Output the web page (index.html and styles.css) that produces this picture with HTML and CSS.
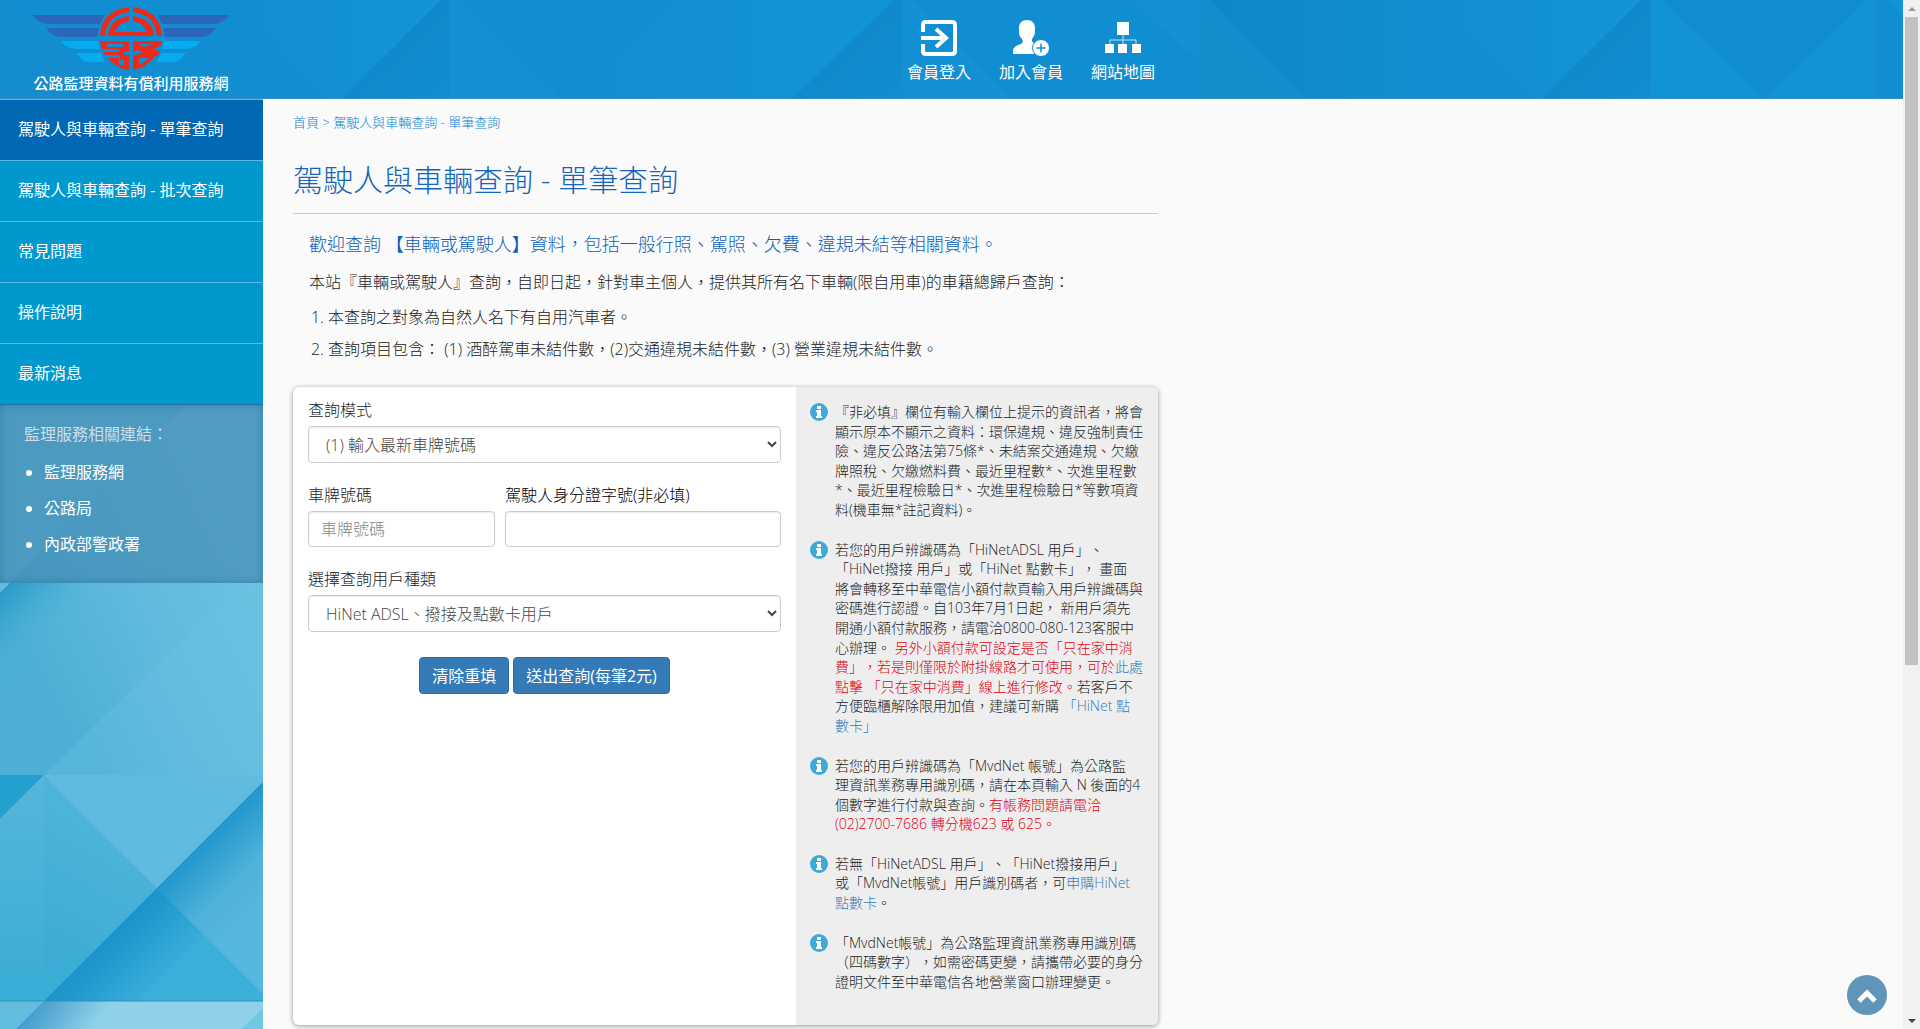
FILE: index.html
```html
<!DOCTYPE html>
<html lang="zh-Hant">
<head>
<meta charset="utf-8">
<title>公路監理資料有償利用服務網</title>
<link rel="stylesheet" href="styles.css">
</head>
<body>
<div class="page">
  <header class="header">
    <svg class="header-art" viewBox="0 0 1903 99" preserveAspectRatio="none" aria-hidden="true">
      <defs>
        <linearGradient id="shadeRight" x1="0" y1="0" x2="1" y2="0">
          <stop offset="0" stop-color="#0f84c6" stop-opacity=".8"/>
          <stop offset="1" stop-color="#118ed1" stop-opacity="0"/>
        </linearGradient>
        <linearGradient id="light" x1="0" y1="0" x2="1" y2="0">
          <stop offset="0" stop-color="#118ed1"/>
          <stop offset="1" stop-color="#1195d7"/>
        </linearGradient>
        <linearGradient id="dark" x1="0" y1="0" x2="1" y2="1">
          <stop offset="0" stop-color="#1084c8"/>
          <stop offset="1" stop-color="#118dd1"/>
        </linearGradient>
      </defs>
      <path fill="#148ccd" d="M0 0H10L110 99H0Z"/>
      <path fill="url(#light)" d="M230 0H441L343 99H330Z"/>
      <path fill="url(#dark)" d="M441 0H450V99H343Z"/>
      <path fill="#1292d5" d="M450 0H460L560 99H450Z"/>
      <path fill="url(#light)" d="M673 0H894L793 99H569Z"/>
      <path fill="url(#dark)" d="M894 0H903V99H793Z"/>
      <path fill="#1391d4" d="M903 0H912L1012 99H903Z"/>
      <path fill="#1292d5" d="M1130 0H1200V62Z"/>
      <path fill="#148dcd" d="M1200 0H1210L1305 99H1200Z"/>
      <path fill="url(#shadeRight)" d="M1210 0H1440L1535 99H1305Z"/>
      <path fill="url(#light)" d="M1435 0H1641L1543 99H1535Z"/>
      <path fill="url(#dark)" d="M1641 0H1651V99H1543Z"/>
      <path fill="#1194d6" d="M1651 0H1661L1761 99H1651Z"/>
      <path fill="#1194d6" d="M1867 0H1876V99H1768Z"/>
      <path fill="#1195d7" d="M1887 0H1903V16Z"/>
    </svg>
    <div class="header-inner">
      <a class="brand" href="#">
        <svg class="brand-mark" viewBox="0 0 198 66" aria-hidden="true">
          <g fill="#2b66ba">
            <path d="M0 9H73L68 18H16Q8 18 0 9Z"/>
            <path d="M198 9H125L130 18H182Q190 18 198 9Z"/>
            <path d="M14 22H67L65 31H29Q20 31 14 22Z"/>
            <path d="M184 22H131L133 31H169Q178 31 184 22Z"/>
          </g>
          <g fill="#05acf0">
            <path d="M29 35H66L68 43H45Q35 43 29 35Z"/>
            <path d="M169 35H132L130 43H153Q163 43 169 35Z"/>
            <path d="M45 47H69L73 56H58Q49 56 45 47Z"/>
            <path d="M153 47H129L125 56H140Q149 56 153 47Z"/>
          </g>
          <g fill="#e92a1d">
            <path d="M97 1V6Q75 9 73 30H68Q69 5 97 1Z"/>
            <path d="M101 1V6Q123 9 125 30H130Q129 5 101 1Z"/>
            <path fill-rule="evenodd" d="M97 10V15Q86 17 83 26H115Q112 17 101 15V10Q121 13 122 30H76Q77 13 97 10Z"/>
            <path fill-rule="evenodd" d="M68 35H97V46H92V49H97V64Q84 62 76 52H87V59H92V54H88V49H73L71 46H87V43H70ZM75 38V41H91V38Z"/>
            <path fill-rule="evenodd" d="M101 35H130L129 39L121 44L128 45L126 50H123Q114 62 101 64V50L111 46L105 44L101 47ZM107 38L112 41L121 38ZM107 52V59Q113 56 117 52Z"/>
          </g>
        </svg>
        <span class="brand-name">公路監理資料有償利用服務網</span>
      </a>
      <nav class="top-nav">
        <a href="#">
          <svg viewBox="0 0 36 36" aria-hidden="true"><path d="M2 12V5Q2 2 5 2H31Q34 2 34 5V31Q34 34 31 34H5Q2 34 2 31V24" fill="none" stroke="#fff" stroke-width="4"/><path d="M0 18H25M15 9L25 18L15 27" fill="none" stroke="#fff" stroke-width="4"/></svg>
          <span>會員登入</span>
        </a>
        <a href="#">
          <svg viewBox="0 0 36 36" aria-hidden="true"><path fill="#fff" d="M14 0C19 0 22 3 22 8V12C22 15 20 17 19 19Q18 22 22 24L21 34H0V30Q1 26 8 24Q11 22 9 19C7 17 6 15 6 12V8C6 3 9 0 14 0Z"/><circle cx="28" cy="28" r="8.500" fill="#fff" stroke="#118ed1"/><path d="M23.500 28H32.500M28 23.500V32.500" stroke="#118ed1" stroke-width="1.500"/></svg>
          <span>加入會員</span>
        </a>
        <a href="#">
          <svg viewBox="0 0 36 36" aria-hidden="true"><path fill="#fff" d="M12 2H24V15H12ZM0 24H9V33H0ZM13 24H22V33H13ZM27 24H36V33H27Z"/><path d="M18 15V24M5 24V20H31V24" fill="none" stroke="#bfe2f5"/></svg>
          <span>網站地圖</span>
        </a>
      </nav>
    </div>
  </header>
  <div class="columns">
    <aside class="sidebar">
      <svg class="side-art" viewBox="0 0 263 624" preserveAspectRatio="xMinYMin slice" aria-hidden="true">
        <defs>
          <linearGradient id="top" gradientUnits="userSpaceOnUse" x1="0" y1="200" x2="220" y2="90"><stop offset="0" stop-color="#4dafd5"/><stop offset=".5" stop-color="#60badd"/><stop offset="1" stop-color="#6cc1e0"/></linearGradient>
          <linearGradient id="edge" gradientUnits="userSpaceOnUse" x1="0" y1="180" x2="50" y2="230"><stop offset="0" stop-color="#1e97c4"/><stop offset="1" stop-color="#4fb2d8" stop-opacity="0"/></linearGradient>
          <linearGradient id="fold" gradientUnits="userSpaceOnUse" x1="155" y1="485" x2="215" y2="545"><stop offset="0" stop-color="#1f97cd"/><stop offset=".6" stop-color="#50b2da"/><stop offset="1" stop-color="#55b7dd"/></linearGradient>
          <linearGradient id="deep" gradientUnits="userSpaceOnUse" x1="95" y1="535" x2="150" y2="590"><stop offset="0" stop-color="#1690c8"/><stop offset="1" stop-color="#3cafda"/></linearGradient>
          <linearGradient id="mid" gradientUnits="userSpaceOnUse" x1="44" y1="560" x2="120" y2="420"><stop offset="0" stop-color="#3aacd5"/><stop offset="1" stop-color="#4fb4da"/></linearGradient>
          <linearGradient id="left" x1="0" y1="0" x2="0" y2="1"><stop offset="0" stop-color="#56b6da"/><stop offset="1" stop-color="#38add6"/></linearGradient>
          <linearGradient id="foot" gradientUnits="userSpaceOnUse" x1="25" y1="600" x2="80" y2="640"><stop offset="0" stop-color="#3a95ca"/><stop offset="1" stop-color="#8fd1e9"/></linearGradient>
        </defs>
        <path fill="#5db9dc" d="M0 0H263V624H0Z"/>
        <path fill="url(#top)" d="M0 0H263V370H0Z"/>
        <path fill="#62bbdc" d="M0 0H188L0 188Z"/>
        <path fill="url(#edge)" d="M0 188L10 178H80V300H0Z"/>
        <path fill="#6cc3e3" fill-opacity=".3" d="M44 370L263 155V370Z"/>
        <path fill="#22a1cf" d="M0 370H44L0 414Z"/>
        <path fill="url(#left)" d="M0 414L44 370V596H0Z"/>
        <path fill="url(#mid)" d="M44 370L157 483L44 596Z"/>
        <path fill="#60bbdf" d="M44 370H263V377L157 483Z"/>
        <path fill="url(#fold)" d="M263 377V589L157 483Z"/>
        <path fill="url(#deep)" d="M157 483L263 589V596H44Z"/>
        <path fill="#62bddf" d="M0 596H44L16 624H0Z"/>
        <path fill="url(#foot)" d="M44 596H263V624H16Z"/>
        <path fill="#70c8e4" d="M263 603V624H242Z"/>
        <path d="M0 596H263" stroke="#2d91b9"/>
      </svg>
      <ul class="side-menu">
        <li><a class="active" href="#">駕駛人與車輛查詢 - 單筆查詢</a></li>
        <li><a href="#">駕駛人與車輛查詢 - 批次查詢</a></li>
        <li><a href="#">常見問題</a></li>
        <li><a href="#">操作說明</a></li>
        <li><a href="#">最新消息</a></li>
      </ul>
      <div class="side-links">
        <p>監理服務相關連結：</p>
        <ul>
          <li><a href="#">監理服務網</a></li>
          <li><a href="#">公路局</a></li>
          <li><a href="#">內政部警政署</a></li>
        </ul>
      </div>
    </aside>
    <main class="main">
      <div class="breadcrumb"><a href="#">首頁</a> &gt; <a href="#">駕駛人與車輛查詢 - 單筆查詢</a></div>
      <h1>駕駛人與車輛查詢 - 單筆查詢</h1>
      <section class="intro">
        <h2>歡迎查詢 【車輛或駕駛人】資料，包括一般行照、駕照、欠費、違規未結等相關資料。</h2>
        <p>本站『車輛或駕駛人』查詢，自即日起，針對車主個人，提供其所有名下車輛(限自用車)的車籍總歸戶查詢：</p>
        <ol>
          <li>本查詢之對象為自然人名下有自用汽車者。</li>
          <li>查詢項目包含： (1) 酒醉駕車未結件數，(2)交通違規未結件數，(3) 營業違規未結件數。</li>
        </ol>
      </section>
      <div class="card">
        <form class="query">
          <div class="field">
            <label for="mode">查詢模式</label>
            <select id="mode"><option>(1) 輸入最新車牌號碼</option></select>
          </div>
          <div class="field-row">
            <div class="field">
              <label for="plate">車牌號碼</label>
              <input id="plate" type="text" placeholder="車牌號碼">
            </div>
            <div class="field">
              <label class="strong" for="idno">駕駛人身分證字號(非必填)</label>
              <input id="idno" type="text">
            </div>
          </div>
          <div class="field">
            <label for="user">選擇查詢用戶種類</label>
            <select id="user"><option>HiNet ADSL、撥接及點數卡用戶</option></select>
          </div>
          <div class="actions">
            <button type="reset">清除重填</button>
            <button type="submit">送出查詢(每筆2元)</button>
          </div>
        </form>
        <ul class="tips">
          <li>
            <svg viewBox="0 0 18 18" aria-hidden="true"><circle cx="9" cy="9" r="9" fill="#3fa9d8"/><path fill="#fff" d="M7 3H11V6H7ZM6 7H11V13H12V15H6V13H7V9H6Z"/></svg>
            <p>『非必填』欄位有輸入欄位上提示的資訊者，將會顯示原本不顯示之資料：環保違規、違反強制責任險、違反公路法第75條*、未結案交通違規、欠繳牌照稅、欠繳燃料費、最近里程數*、次進里程數*、最近里程檢驗日*、次進里程檢驗日*等數項資料(機車無*註記資料)。</p>
          </li>
          <li>
            <svg viewBox="0 0 18 18" aria-hidden="true"><circle cx="9" cy="9" r="9" fill="#3fa9d8"/><path fill="#fff" d="M7 3H11V6H7ZM6 7H11V13H12V15H6V13H7V9H6Z"/></svg>
            <p>若您的用戶辨識碼為「HiNetADSL 用戶」、<br>「HiNet撥接 用戶」或「HiNet 點數卡」， 畫面<br>將會轉移至中華電信小額付款頁輸入用戶辨識碼與密碼進行認證。自103年7月1日起， 新用戶須先<br>開通小額付款服務，請電洽0800-080-123客服中<br>心辦理。 <em>另外小額付款可設定是否「只在家中消<br>費」，若是則僅限於附掛線路才可使用，可於<a href="#">此處</a>點擊 「只在家中消費」線上進行修改。</em>若客戶不<br>方便臨櫃解除限用加值，建議可新購 <a href="#">「HiNet 點<br>數卡」</a></p>
          </li>
          <li>
            <svg viewBox="0 0 18 18" aria-hidden="true"><circle cx="9" cy="9" r="9" fill="#3fa9d8"/><path fill="#fff" d="M7 3H11V6H7ZM6 7H11V13H12V15H6V13H7V9H6Z"/></svg>
            <p>若您的用戶辨識碼為「MvdNet 帳號」為公路監<br>理資訊業務專用識別碼，請在本頁輸入 N 後面的4<br>個數字進行付款與查詢。<em>有帳務問題請電洽<br>(02)2700-7686 轉分機623 或 625。</em></p>
          </li>
          <li>
            <svg viewBox="0 0 18 18" aria-hidden="true"><circle cx="9" cy="9" r="9" fill="#3fa9d8"/><path fill="#fff" d="M7 3H11V6H7ZM6 7H11V13H12V15H6V13H7V9H6Z"/></svg>
            <p>若無「HiNetADSL 用戶」、「HiNet撥接用戶」<br>或「MvdNet帳號」用戶識別碼者，可<a href="#">申購HiNet<br>點數卡</a>。</p>
          </li>
          <li>
            <svg viewBox="0 0 18 18" aria-hidden="true"><circle cx="9" cy="9" r="9" fill="#3fa9d8"/><path fill="#fff" d="M7 3H11V6H7ZM6 7H11V13H12V15H6V13H7V9H6Z"/></svg>
            <p>「MvdNet帳號」為公路監理資訊業務專用識別碼（四碼數字），如需密碼更變，請攜帶必要的身分證明文件至中華電信各地營業窗口辦理變更。</p>
          </li>
        </ul>
      </div>
    </main>
  </div>
</div>
<div class="scrollbar" aria-hidden="true">
  <span class="arrow up"></span>
  <span class="thumb"></span>
  <span class="arrow down"></span>
</div>
<a class="to-top" href="#" aria-label="回到頁首">
  <svg viewBox="0 0 40 40" aria-hidden="true"><path d="M12 26L20 18L28 26" fill="none" stroke="#fff" stroke-width="5"/></svg>
</a>
</body>
</html>
```
FILE: styles.css
```css
* { box-sizing: border-box; }

body {
  margin: 0;
  display: grid;
  grid-template-columns: 1fr 17px;
  height: 100vh;
  overflow: hidden;
  background: #fafafa;
  color: #222;
  font: 300 16px/24px "Open Sans", "Noto Sans CJK TC", sans-serif;
  text-spacing-trim: space-all;
}

a { color: inherit; text-decoration: none; }
ul, ol { margin: 0; padding: 0; list-style: none; }
h1, h2, p { margin: 0; font-weight: 300; }
em { font-style: normal; color: #e3000f; }
svg { display: block; }

.page { display: flex; flex-direction: column; min-height: 100vh; min-width: 0; }

/* header */
.header { position: relative; background: #118ed1; height: 99px; border-bottom: 1px solid #3a8dbb; }
.header-art { position: absolute; inset: 0; width: 100%; height: 100%; }
.header-inner {
  position: relative;
  display: flex;
  justify-content: space-between;
  max-width: 1158px;
  padding: 6px 3px 0 32px;
  color: #fff;
}
.brand { display: flex; flex-direction: column; align-items: center; }
.brand-mark { width: 198px; height: 66px; }
.brand-name { font-size: 15px; font-weight: 500; line-height: 22px; }
.top-nav { display: flex; gap: 28px; padding-top: 14px; font-weight: 400; }
.top-nav a { display: flex; flex-direction: column; align-items: center; gap: 4px; }
.top-nav svg { width: 36px; height: 36px; }

/* sidebar */
.columns { flex: 1; display: flex; min-width: 0; }
.sidebar { position: relative; flex: 0 0 263px; }
.side-art { position: absolute; left: 0; bottom: 0; width: 263px; height: 624px; }
.side-menu { position: relative; font-weight: 400; }
.side-menu a {
  display: block;
  padding: 17px 18px 19px;
  border-top: 1px solid #5bb8e0;
  background: #0199cd;
  color: #fff;
}
.side-menu a.active { background: #0068b4; }
.side-links {
  position: relative;
  height: 179px;
  padding: 17px 24px;
  border-top: 1px solid #1a72a8;
  background: rgba(62, 131, 173, .6);
  box-shadow: inset 0 0 8px rgba(0, 70, 120, .3);
  color: #fff;
  font-weight: 400;
}
.side-links p { font-weight: 400; color: #cfdde6; padding-bottom: 8px; }
.side-links ul { list-style: disc; padding-left: 20px; line-height: 36px; }

/* main column */
.main { flex: 0 1 895px; padding: 12px 0 0 30px; min-width: 0; }
.breadcrumb { font-size: 13px; line-height: 22px; color: #0b84d0; }
.main h1 {
  margin-top: 29px;
  padding-bottom: 15px;
  border-bottom: 1px solid #ccc;
  color: #1565b8;
  font-size: 30px;
  line-height: 36px;
}
.intro { padding: 17px 0 0 16px; }
.intro h2 { color: #0d5fb8; font-size: 18px; line-height: 26px; }
.intro p { padding-top: 13px; }
.intro ol { list-style: decimal; padding: 7px 0 0 19px; line-height: 32px; }

.card {
  display: flex;
  margin-top: 22px;
  min-height: 638px;
  border-radius: 6px;
  background: #fff;
  box-shadow: 0 1px 5px rgba(0, 0, 0, .4);
  overflow: hidden;
}
.query { flex: 1; padding: 11px 15px; display: flex; flex-direction: column; gap: 20px; }
.field { display: flex; flex-direction: column; gap: 4px; min-width: 0; }
.field label { color: #222; }
.field label.strong { color: #000; }
.field-row { display: grid; grid-template-columns: 187px 1fr; gap: 10px; }
.field input, .field select {
  width: 100%;
  height: 37px;
  border: 1px solid #ccc;
  border-radius: 4px;
  background: #fff;
  color: #444;
  font: inherit;
  padding: 0 12px;
  box-shadow: inset 0 1px 1px rgba(0, 0, 0, .08);
}
.field input { height: 36px; }
.field select { padding: 0 0 0 13px; }
.field input::placeholder { color: #888; }
.actions { display: flex; justify-content: center; gap: 4px; padding-top: 5px; }
.actions button {
  height: 37px;
  padding: 0 12px;
  border: 1px solid #2e6da4;
  border-radius: 4px;
  background: #337ab7;
  color: #fff;
  font: inherit;
  font-weight: 400;
}

.tips {
  flex: 0 0 362px;
  display: flex;
  flex-direction: column;
  gap: 20px;
  padding: 15px 14px 0;
  background: #eee;
  font-size: 14px;
  line-height: 1.4;
}
.tips li { display: flex; gap: 7px; }
.tips svg { flex: 0 0 18px; height: 18px; margin-top: 1px; }
.tips a { color: #337ab7; }
.tips p { flex: 0 0 309px; }

/* floating pieces */
.to-top {
  position: fixed;
  right: 33px;
  bottom: 14px;
  width: 40px;
  height: 40px;
  border-radius: 50%;
  background: #5e95b9;
}
.scrollbar { display: flex; flex-direction: column; align-items: center; background: #f1f1f1; }
.arrow { height: 17px; display: flex; align-items: center; }
.arrow::before { content: ""; border: 4px solid transparent; }
.arrow.up::before { border-top: 0; border-bottom-color: #999; }
.arrow.down { margin-top: auto; }
.arrow.down::before { border-bottom: 0; border-top-color: #444; }
.thumb { width: 13px; flex: 0 0 63%; background: #c1c1c1; }
```
